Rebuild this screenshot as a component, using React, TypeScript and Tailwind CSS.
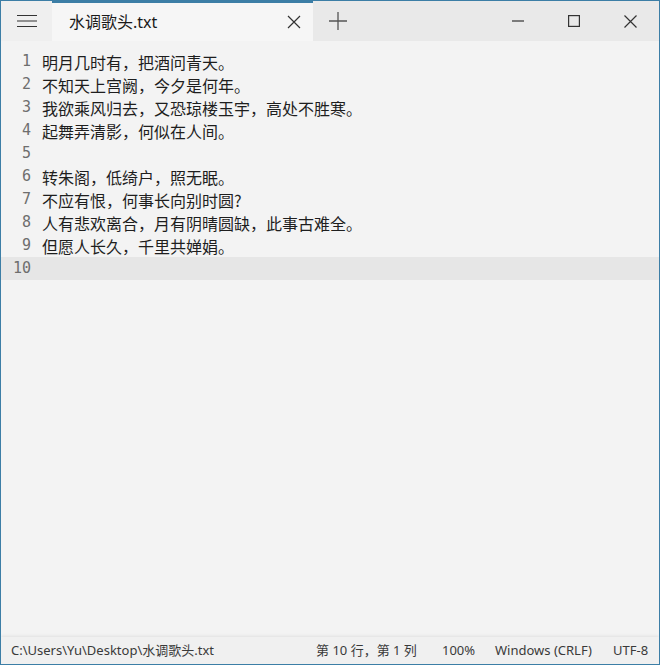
import React from "react";

const lines = [
  "明月几时有，把酒问青天。",
  "不知天上宫阙，今夕是何年。",
  "我欲乘风归去，又恐琼楼玉宇，高处不胜寒。",
  "起舞弄清影，何似在人间。",
  "",
  "转朱阁，低绮户，照无眠。",
  "不应有恨，何事长向别时圆?",
  "人有悲欢离合，月有阴晴圆缺，此事古难全。",
  "但愿人长久，千里共婵娟。",
  "",
];

const cjk = { fontFamily: '"Noto Sans CJK SC", "Noto Sans", sans-serif' };
const ui = { fontFamily: '"Noto Sans", "Noto Sans CJK SC", sans-serif' };

export default function App() {
  return (
    <div className="w-[660px] h-[665px] flex flex-col bg-[#f3f3f3] border border-[#3c7ea6] overflow-hidden">
      {/* Title bar */}
      <div className="h-[40px] flex bg-[#e9e9e9] shrink-0">
        <div className="w-[51px] flex items-center justify-center bg-[#efefef] shadow-[1px_0_3px_rgba(0,0,0,0.08)]">
          <svg width="20" height="14" viewBox="0 0 20 14" fill="none" stroke="#333" strokeWidth="1.2">
            <path d="M0 1.5h20M0 7h20M0 12.5h20" />
          </svg>
        </div>
        <div className="w-[261px] flex items-center bg-[#f6f6f6] border-t-2 border-[#3c7ea6] pl-[17px] pr-[12px]">
          <span className="text-[16px] text-[#1a1a1a] flex-1" style={ui}>水调歌头.txt</span>
          <svg width="14" height="14" viewBox="0 0 14 14" stroke="#333" strokeWidth="1.2">
            <path d="M1 1l12 12M13 1L1 13" />
          </svg>
        </div>
        <div className="w-[50px] flex items-center justify-center">
          <svg width="18" height="18" viewBox="0 0 18 18" stroke="#555" strokeWidth="1.3">
            <path d="M9 0v18M0 9h18" />
          </svg>
        </div>
        <div className="flex-1" />
        <div className="w-[56px] flex items-center justify-center">
          <svg width="12" height="2" viewBox="0 0 12 2" stroke="#333" strokeWidth="1.2">
            <path d="M0 1h12" />
          </svg>
        </div>
        <div className="w-[56px] flex items-center justify-center">
          <svg width="12" height="12" viewBox="0 0 12 12" fill="none" stroke="#333" strokeWidth="1.2">
            <rect x="0.6" y="0.6" width="10.8" height="10.8" />
          </svg>
        </div>
        <div className="w-[57px] flex items-center justify-center">
          <svg width="13" height="13" viewBox="0 0 13 13" stroke="#333" strokeWidth="1.2">
            <path d="M0.5 0.5l12 12M12.5 0.5l-12 12" />
          </svg>
        </div>
      </div>

      {/* Editor */}
      <div className="flex-1 pt-[9px] bg-[#f3f3f3]">
        {lines.map((t, i) => (
          <div
            key={i}
            className={`flex items-center h-[23px] ${i === 9 ? "bg-[#e6e6e6]" : ""}`}
          >
            <div
              className="w-[31px] text-right text-[15px] text-[#6e6e6e] pr-[1px]"
              style={{ fontFamily: '"DejaVu Sans Mono", monospace' }}
            >
              {i + 1}
            </div>
            <div className="pl-[10px] text-[16px] text-[#1e1e1e] whitespace-pre" style={cjk}>
              {t}
            </div>
          </div>
        ))}
      </div>

      {/* Status bar */}
      <div className="h-[27px] shrink-0 flex items-center bg-[#f0f0f0] shadow-[0_-1px_3px_rgba(0,0,0,0.08)] text-[13px] text-[#3a3a3a]" style={ui}>
        <div className="pl-[10px] flex-1">C:\Users\Yu\Desktop\水调歌头.txt</div>
        <div className="w-[126px]">第 10 行，第 1 列</div>
        <div className="w-[53px]">100%</div>
        <div className="w-[118px]">Windows (CRLF)</div>
        <div className="w-[46px]">UTF-8</div>
      </div>
    </div>
  );
}
